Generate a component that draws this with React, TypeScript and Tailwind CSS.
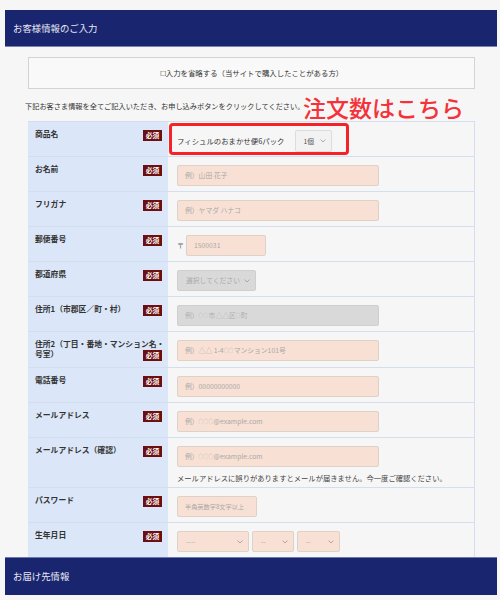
import type { ReactNode } from 'react'

const FONT = { fontFamily: '"Noto Sans CJK JP", "Noto Sans", sans-serif' }

function Badge() {
  return (
    <span className="mt-[1px] flex h-[11px] w-[19px] shrink-0 items-center justify-center bg-[#6b0f10] text-[6.8px] font-bold leading-none text-white">
      必須
    </span>
  )
}

function Chevron({ color = '#999' }: { color?: string }) {
  return (
    <svg width="6" height="4" viewBox="0 0 6 4" className="shrink-0">
      <polyline points="0.5,0.5 3,3 5.5,0.5" fill="none" stroke={color} strokeWidth="0.8" />
    </svg>
  )
}

// small circles used in placeholders (○○)
function O({ n }: { n: number }) {
  return <span className="text-[4.5px] tracking-[0.5px]">{'○'.repeat(n)}</span>
}

function Field({ text, gray, w = 'w-[202px]', dark }: { text: ReactNode; gray?: boolean; w?: string; dark?: boolean }) {
  return (
    <div
      className={`flex h-[21px] items-center overflow-hidden whitespace-nowrap rounded-[2px] border px-[7px] text-[6.8px] ${w} ${
        gray ? 'border-[#cfcfcf] bg-[#d9d9d9] text-[#b0b0b0]' : 'border-[#dcd2ca] bg-[#f8e1d4] text-[#a8a8a8]'
      } ${dark ? 'text-[#888]' : ''}`}
    >
      {text}
    </div>
  )
}

function Select({ text, w, gray }: { text: string; w: string; gray?: boolean }) {
  return (
    <div
      className={`flex h-[21px] items-center justify-between rounded-[2px] border pl-[8px] pr-[5px] text-[6.8px] ${w} ${
        gray ? 'border-[#cfcfcf] bg-[#d9d9d9] text-[#aaa]' : 'border-[#dcd2ca] bg-[#f8e1d4] text-[#aaa]'
      }`}
    >
      <span>{text}</span>
      <Chevron />
    </div>
  )
}

function Row({ label, h = 'h-[35px]', children }: { label: ReactNode; h?: string; children?: ReactNode }) {
  return (
    <div className={`flex border-b border-[#d3deee] ${h}`}>
      <div className="flex w-[140px] shrink-0 items-start justify-between bg-[#dbe7f8] pl-[7px] pr-[6px] pt-[7px]">
        {typeof label === 'string' ? (
          <>
            <span className="text-[7.8px] font-bold leading-[10px] text-[#333]">{label}</span>
            <Badge />
          </>
        ) : (
          label
        )}
      </div>
      <div className="flex-1 pl-[9px] pt-[8px]">{children}</div>
    </div>
  )
}

export default function App() {
  return (
    <div className="relative h-[600px] w-[500px] overflow-hidden bg-[#f6f6f6]" style={FONT}>
      {/* Header */}
      <div className="ml-[5px] mt-[10px] flex h-[37px] w-[492px] items-center border-b border-[#7a82b5] bg-[#19256f] pl-[8px] text-[9.4px] text-[#e8e9f2]">
        お客様情報のご入力
      </div>

      <div className="ml-[28px] mt-[10px] flex h-[32px] w-[447px] items-center justify-center border border-[#d3d3d3] bg-[#f9f9f9] text-[7.4px] text-[#333]">
        ☐入力を省略する（当サイトで購入したことがある方）
      </div>

      <p className="mt-[12px] pl-[25px] text-[7.2px] leading-[10px] text-[#333]">
        下記お客さま情報を全てご記入いただき、お申し込みボタンをクリックしてください。
      </p>

      {/* Form table */}
      <div className="ml-[28px] mt-[10px] w-[447px] border-r border-t border-[#d3deee]">
        <Row label="商品名">
          <div className="flex items-center">
            <span className="mt-[-1px] text-[7.4px] text-[#333]">フィシュルのおまかせ便6パック</span>
            <div className="ml-[11px] flex h-[22px] w-[37px] items-center justify-between rounded-[2px] border border-[#dcdcdc] bg-[#f2f2f2] pl-[7px] pr-[5px] text-[6.8px] text-[#555]">
              <span>1個</span>
              <Chevron />
            </div>
          </div>
        </Row>
        <Row label="お名前">
          <Field text="例）山田 花子" />
        </Row>
        <Row label="フリガナ">
          <Field text="例）ヤマダ ハナコ" />
        </Row>
        <Row label="郵便番号">
          <div className="flex items-center">
            <span className="w-[9px] text-[7px] text-[#666]">〒</span>
            <Field text="1500031" w="w-[80px]" dark />
          </div>
        </Row>
        <Row label="都道府県">
          <Select text="選択してください" w="w-[79px]" gray />
        </Row>
        <Row label="住所1（市郡区／町・村）">
          <Field
            text={
              <>
                例）<O n={2} />市△△区<O n={1} />町
              </>
            }
            gray
          />
        </Row>
        <Row
          h="h-[36px]"
          label={
            <div className="flex w-full flex-col text-[7.8px] font-bold leading-[10px] text-[#333]">
              <span className="whitespace-nowrap">住所2（丁目・番地・マンション名・</span>
              <div className="flex items-start justify-between">
                <span>号室）</span>
                <Badge />
              </div>
            </div>
          }
        >
          <Field
            text={
              <>
                例）△△ 1-4 <O n={2} />マンション101号
              </>
            }
          />
        </Row>
        <Row label="電話番号">
          <Field text="例）00000000000" />
        </Row>
        <Row label="メールアドレス">
          <Field
            text={
              <>
                例）<O n={3} />@example.com
              </>
            }
          />
        </Row>
        <Row label="メールアドレス（確認）" h="h-[50px]">
          <Field
            text={
              <>
                例）<O n={3} />@example.com
              </>
            }
          />
          <p className="mt-[6px] text-[7.3px] leading-[10px] text-[#444]">
            メールアドレスに誤りがありますとメールが届きません。今一度ご確認ください。
          </p>
        </Row>
        <Row label="パスワード">
          <Field text={<span className="text-[6.2px]">半角英数字8文字以上</span>} w="w-[80px]" />
        </Row>
        <Row label="生年月日">
          <div className="flex gap-[3px]">
            <Select text="----" w="w-[72px]" />
            <Select text="--" w="w-[42px]" />
            <Select text="--" w="w-[43px]" />
          </div>
        </Row>
        <Row label={<span />} />
      </div>

      {/* Annotation overlay */}
      <div className="absolute left-[169px] top-[123px] h-[32px] w-[180px] rounded-[4px] border-[3px] border-[#f5222a]" />
      <div className="absolute left-[303px] top-[93px] text-[23px] font-medium leading-[28px] text-[#f5323a]">
        注文数はこちら
      </div>

      <div className="absolute left-[5px] top-[557px] flex h-[38px] w-[492px] items-center border-t border-[#6d78b3] bg-[#19256f] pl-[8px] text-[9.4px] text-[#e8e9f2]">
        お届け先情報
      </div>
    </div>
  )
}
